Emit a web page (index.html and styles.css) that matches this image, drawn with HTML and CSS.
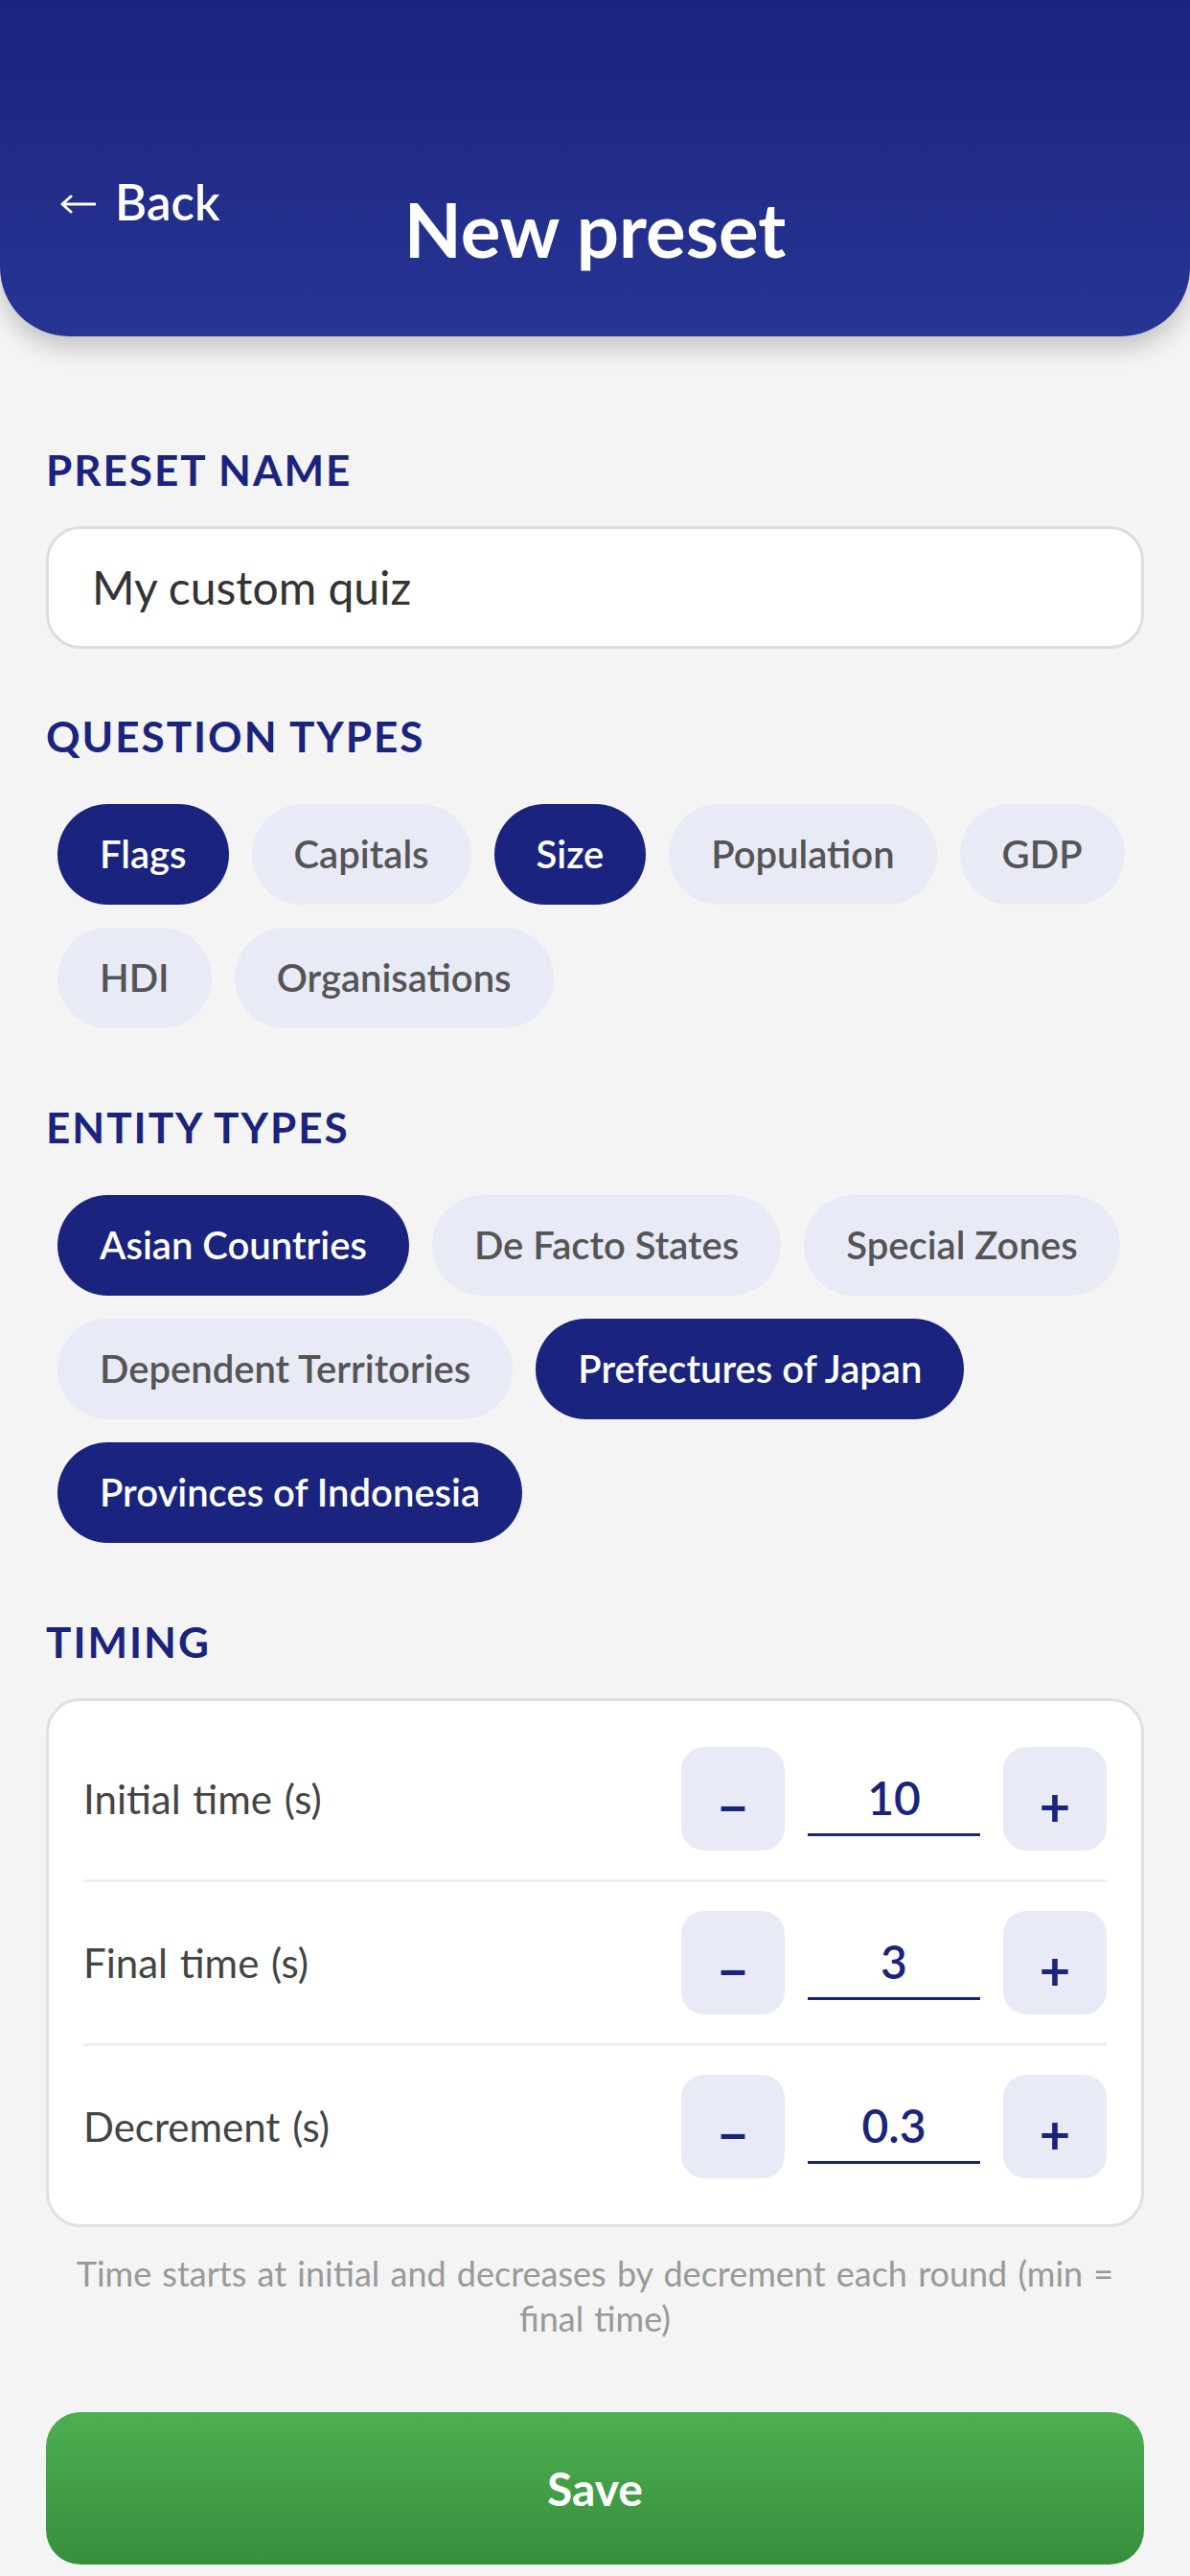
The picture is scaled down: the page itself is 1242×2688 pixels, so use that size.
FILE: index.html
```html
<!DOCTYPE html>
<html lang="en">
<head>
<meta charset="utf-8">
<title>New preset</title>
<link rel="stylesheet" href="styles.css">
</head>
<body>
<header class="topbar">
  <button class="back" type="button">
    <svg class="back-icon" width="38" height="22" viewBox="0 0 38 22" aria-hidden="true"><path d="M3 11 H37 M12 3 L3 11 L12 19" fill="none" stroke="#fff" stroke-width="3" stroke-linecap="round" stroke-linejoin="round"/></svg>
    <span>Back</span>
  </button>
  <h1 class="title">New preset</h1>
  <span class="spacer"></span>
</header>

<main class="content">
  <section class="section">
    <h2 class="label">Preset name</h2>
    <input class="name-input" type="text" value="My custom quiz">
  </section>

  <section class="section">
    <h2 class="label">Question types</h2>
    <div class="chips">
      <button class="chip chip-on" type="button">Flags</button>
      <button class="chip" type="button">Capitals</button>
      <button class="chip chip-on" type="button">Size</button>
      <button class="chip" type="button">Population</button>
      <button class="chip" type="button">GDP</button>
      <button class="chip" type="button">HDI</button>
      <button class="chip" type="button">Organisations</button>
    </div>
  </section>

  <section class="section">
    <h2 class="label">Entity types</h2>
    <div class="chips">
      <button class="chip chip-on" type="button">Asian Countries</button>
      <button class="chip" type="button">De Facto States</button>
      <button class="chip" type="button">Special Zones</button>
      <button class="chip" type="button">Dependent Territories</button>
      <button class="chip chip-on" type="button">Prefectures of Japan</button>
      <button class="chip chip-on" type="button">Provinces of Indonesia</button>
    </div>
  </section>

  <section class="section section-timing">
    <h2 class="label">Timing</h2>
    <div class="card">
      <div class="row">
        <span class="row-label">Initial time (s)</span>
        <div class="stepper">
          <button class="step" type="button">&minus;</button>
          <input class="step-value" type="text" value="10">
          <button class="step" type="button">+</button>
        </div>
      </div>
      <div class="row">
        <span class="row-label">Final time (s)</span>
        <div class="stepper">
          <button class="step" type="button">&minus;</button>
          <input class="step-value" type="text" value="3">
          <button class="step" type="button">+</button>
        </div>
      </div>
      <div class="row">
        <span class="row-label">Decrement (s)</span>
        <div class="stepper">
          <button class="step" type="button">&minus;</button>
          <input class="step-value" type="text" value="0.3">
          <button class="step" type="button">+</button>
        </div>
      </div>
    </div>
    <p class="hint">Time starts at initial and decreases by decrement each round (min = final time)</p>
  </section>

  <button class="save" type="button">Save</button>
</main>
</body>
</html>
```

FILE: styles.css
```css
* {
  box-sizing: border-box;
}

body {
  margin: 0;
  background: #f4f4f4;
  font-family: "Lato", "Noto Sans", sans-serif;
  color: #333;
}

button,
input {
  font-family: inherit;
}

/* Header */
.topbar {
  display: grid;
  grid-template-columns: 1fr auto 1fr;
  align-items: start;
  padding: 180px 48px 64px;
  background: linear-gradient(180deg, #1a237e 0%, #283593 100%);
  border-radius: 0 0 72px 72px;
  box-shadow: 0 12px 24px rgba(0, 0, 0, 0.2);
}

.back {
  justify-self: start;
  display: flex;
  align-items: center;
  gap: 20px;
  margin: 0 0 0 14px;
  padding: 0;
  border: none;
  background: none;
  color: #fff;
  font-size: 51px;
  font-weight: 600;
  line-height: 1.2;
}

.back-icon {
  display: block;
  margin-top: 4px;
}

.title {
  margin: 13px 0 0;
  color: #fff;
  font-size: 78px;
  font-weight: 700;
  line-height: 1.2;
  text-align: center;
}

/* Content */
.content {
  padding: 112px 48px 12px;
}

.section {
  margin-bottom: 64px;
}

.label {
  margin: 0 0 32px;
  color: #1a237e;
  font-size: 44px;
  font-weight: 700;
  line-height: 54px;
  letter-spacing: 2px;
  text-transform: uppercase;
}

.name-input {
  display: block;
  width: 100%;
  height: 128px;
  padding: 0 45px;
  border: 3px solid #dddddd;
  border-radius: 36px;
  background: #fff;
  color: #333;
  font-size: 48px;
  outline: none;
}

/* Chips */
.chips {
  display: flex;
  flex-wrap: wrap;
  gap: 24px;
  padding: 12px;
}

.chip {
  padding: 27px 44px;
  border: none;
  border-radius: 60px;
  background: #e8eaf6;
  color: #555;
  font-size: 40px;
  font-weight: 600;
  line-height: 51px;
}

.chip-on {
  background: #1a237e;
  color: #fff;
}

/* Timing card */
.section-timing {
  margin-bottom: 0;
}

.card {
  padding: 18px 36px;
  border: 3px solid #e0e0e0;
  border-radius: 36px;
  background: #fff;
}

.row {
  display: flex;
  align-items: center;
  justify-content: space-between;
  padding: 30px 0;
  border-bottom: 3px solid #eeeeee;
}

.row:last-child {
  border-bottom: none;
}

.row-label {
  color: #444;
  font-size: 42px;
  word-spacing: 2px;
}

.stepper {
  display: flex;
  align-items: center;
  gap: 24px;
}

.step {
  display: flex;
  align-items: center;
  justify-content: center;
  width: 108px;
  height: 108px;
  padding: 16px 0 0;
  border: none;
  border-radius: 24px;
  background: #e8eaf6;
  color: #1a237e;
  font-size: 56px;
  font-weight: 700;
  line-height: 1;
}

.step-value {
  width: 180px;
  height: 78px;
  padding: 0;
  border: none;
  border-bottom: 3px solid #1a237e;
  background: transparent;
  color: #1a237e;
  font-size: 48px;
  font-weight: 600;
  text-align: center;
  outline: none;
}

.hint {
  margin: 25px 0 0;
  padding: 0 24px;
  color: #999;
  font-size: 36px;
  line-height: 47px;
  text-align: center;
  word-spacing: 2px;
}

.save {
  display: block;
  width: 100%;
  margin-top: 74px;
  padding: 51px 0;
  border: none;
  border-radius: 36px;
  background: linear-gradient(180deg, #4caf50 0%, #388e3c 100%);
  color: #fff;
  font-size: 48px;
  font-weight: 700;
  line-height: 1.2;
}
```
